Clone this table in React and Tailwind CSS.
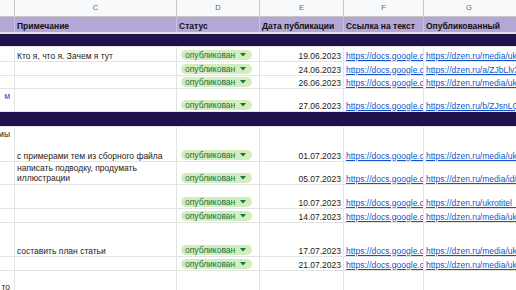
const DOCS = 'https://docs.google.com/document/d/1xQ';
const DZEN = 'https://dzen.ru/media/ukrotitel_slov/';

const rows = [
  { h: 'h-[15px]', note: 'Кто я, что я. Зачем я тут', date: '19.06.2023', pub: DZEN },
  { h: 'h-[14px]', date: '24.06.2023', pub: 'https://dzen.ru/a/ZJbLlvXk' },
  { h: 'h-[13px]', date: '26.06.2023', pub: DZEN },
  { h: 'h-[23px]', side: 'м', sideLink: true, date: '27.06.2023', pub: 'https://dzen.ru/b/ZJsnLQ' },
  { band: true },
  { h: 'h-[35px]', side: 'мы', note: 'с примерами тем из сборного файла', date: '01.07.2023', pub: DZEN },
  { h: 'h-[23px]', note: ['написать подводку, продумать', 'иллюстрации'], date: '05.07.2023', pub: 'https://dzen.ru/media/id/64' },
  { h: 'h-[24px]', date: '10.07.2023', pub: 'https://dzen.ru/ukrotitel_slov' },
  { h: 'h-[14px]', date: '14.07.2023', pub: DZEN },
  { h: 'h-[34px]', note: 'составить план статьи', date: '17.07.2023', pub: DZEN },
  { h: 'h-[14px]', date: '21.07.2023', pub: DZEN },
  { h: 'h-[22px]', sideBottom: 'то' },
];

const grid = 'grid grid-cols-[15px_162px_83px_84px_80px_1fr]';
const cell = 'border-r border-b border-[#e2e3e3] overflow-hidden whitespace-nowrap';

function Pill() {
  return (
    <div className="flex items-center h-[10px] w-[71px] ml-[4px] mb-[1px] rounded-full bg-[#d4edbc] text-[#11734b] pl-[4px] pr-[6px] justify-between">
      <span className="leading-none">опубликован</span>
      <svg width="6" height="4" viewBox="0 0 6 4">
        <path d="M0 0h6L3 3.5z" fill="#11734b" />
      </svg>
    </div>
  );
}

function Link({ href }) {
  return (
    <span className="text-[#1155cc] underline pl-[2px] pb-[1px] leading-none">{href}</span>
  );
}

function Row({ r }) {
  if (r.band) {
    return <div className="h-[15px] bg-[#20124d] border-b border-[#e2e3e3]" />;
  }
  return (
    <div className={`${grid} ${r.h}`}>
      <div className={`${cell} flex justify-end pr-[4px] ${r.sideBottom ? 'items-end pb-[1px]' : 'items-start pt-[3px]'}`}>
        <span className={`leading-none ${r.sideLink ? 'text-[#1155cc]' : 'text-[#222]'}`}>{r.side || r.sideBottom}</span>
      </div>
      <div className={`${cell} flex flex-col justify-end pl-[2px] pb-[1px]`}>
        {Array.isArray(r.note)
          ? r.note.map((t) => <span key={t} className="leading-[10px]">{t}</span>)
          : r.note && <span className="leading-none">{r.note}</span>}
      </div>
      <div className={`${cell} flex items-end`}>{r.date && <Pill />}</div>
      <div className={`${cell} flex items-end justify-end pr-[2px] pb-[1px]`}>
        {r.date && <span className="leading-none">{r.date}</span>}
      </div>
      <div className={`${cell} flex items-end`}>{r.date && <Link href={DOCS} />}</div>
      <div className={`${cell} flex items-end border-r-0`}>{r.pub && <Link href={r.pub} />}</div>
    </div>
  );
}

export default function App() {
  return (
    <div className="w-[516px] h-[290px] overflow-hidden bg-white text-[8.5px] text-[#222] font-['Liberation_Sans',Arial,sans-serif]">
      <div className={`${grid} h-[17px] bg-[#f8f9fa] border-b border-[#c7c7c7] text-[7.5px] text-[#5f6368]`}>
        <div className="border-r border-[#c7c7c7]" />
        <div className="border-r border-[#c7c7c7] flex items-center justify-center">C</div>
        <div className="border-r border-[#c7c7c7] flex items-center justify-center">D</div>
        <div className="border-r border-[#c7c7c7] flex items-center justify-center">E</div>
        <div className="border-r border-[#c7c7c7] flex items-center justify-center">F</div>
        <div className="flex items-center justify-center pr-[2px]">G</div>
      </div>
      <div className={`${grid} h-[17px] bg-[#b4a7d6] border-b-2 border-[#e2e3e3] font-bold text-[#111]`}>
        <div className="border-r border-[#c9c0e2]" />
        <div className="border-r border-[#c9c0e2] flex items-end pl-[2px] pb-[2px] leading-none">Примечание</div>
        <div className="border-r border-[#c9c0e2] flex items-end pl-[2px] pb-[2px] leading-none">Статус</div>
        <div className="border-r border-[#c9c0e2] flex items-end pl-[2px] pb-[2px] leading-none">Дата публикации</div>
        <div className="border-r border-[#c9c0e2] flex items-end pl-[2px] pb-[2px] leading-none">Ссылка на текст</div>
        <div className="flex items-end pl-[2px] pb-[2px] leading-none whitespace-nowrap">Опубликованный</div>
      </div>
      <div className="h-[13px] bg-[#20124d] border-b border-[#e2e3e3]" />
      {rows.map((r, i) => (
        <Row key={i} r={r} />
      ))}
    </div>
  );
}
